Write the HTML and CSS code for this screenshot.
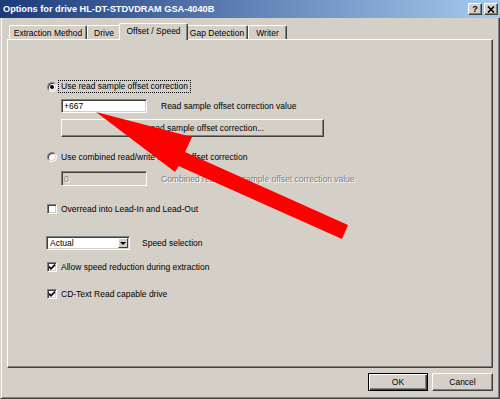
FILE: index.html
```html
<!DOCTYPE html>
<html lang="en">
<head>
    <meta charset="UTF-8">
    <title>Options for drive HL-DT-STDVDRAM GSA-4040B</title>
    <link rel="stylesheet" href="styles.css">
</head>
<body>
    <div class="window">
        <div class="titlebar">
            <span class="title">Options for drive HL-DT-STDVDRAM GSA-4040B</span>
            <div class="caption-buttons">
                <div class="caption-btn">?</div>
                <div class="caption-btn">
                    <svg width="8" height="7" viewBox="0 0 8 7">
                        <path d="M1 0.5 L7 6.5 M7 0.5 L1 6.5" stroke="#000" stroke-width="1.6" fill="none"/>
                    </svg>
                </div>
            </div>
        </div>

        <div class="dialog">
            <div class="tabs">
                <div class="tab">Extraction Method</div>
                <div class="tab">Drive</div>
                <div class="tab active">Offset / Speed</div>
                <div class="tab">Gap Detection</div>
                <div class="tab">Writer</div>
            </div>

            <div class="panel">
                <div class="row opt-read">
                    <span class="radio checked"></span>
                    <span class="label focus">Use read sample offset correction</span>
                </div>
                <div class="row indent read-value">
                    <div class="textbox">+667</div>
                    <span class="field-label">Read sample offset correction value</span>
                </div>
                <div class="row indent detect">
                    <div class="button wide">Detect read sample offset correction...</div>
                </div>
                <div class="row opt-combined">
                    <span class="radio"></span>
                    <span class="label">Use combined read/write sample offset correction</span>
                </div>
                <div class="row indent combined-value">
                    <div class="textbox disabled">0</div>
                    <span class="field-label disabled">Combined read/write sample offset correction value</span>
                </div>
                <div class="row overread">
                    <span class="checkbox"></span>
                    <span class="label">Overread into Lead-In and Lead-Out</span>
                </div>
                <div class="row speed">
                    <div class="select">
                        <span class="select-value">Actual</span>
                        <span class="select-btn"></span>
                    </div>
                    <span class="speed-label">Speed selection</span>
                </div>
                <div class="row reduce">
                    <span class="checkbox checked">
                        <svg width="8" height="8" viewBox="0 0 8 8">
                            <path d="M1 3.6 L3 5.8 L7 1.6" stroke="#000" stroke-width="1.7" fill="none"/>
                        </svg>
                    </span>
                    <span class="label">Allow speed reduction during extraction</span>
                </div>
                <div class="row cdtext">
                    <span class="checkbox checked">
                        <svg width="8" height="8" viewBox="0 0 8 8">
                            <path d="M1 3.6 L3 5.8 L7 1.6" stroke="#000" stroke-width="1.7" fill="none"/>
                        </svg>
                    </span>
                    <span class="label">CD-Text Read capable drive</span>
                </div>
            </div>

            <div class="footer">
                <div class="button default ok">OK</div>
                <div class="button cancel">Cancel</div>
            </div>
        </div>

        <!-- the red pointer drawn over the dialog -->
        <svg class="arrow" width="500" height="399" viewBox="0 0 500 399">
            <polygon points="96,112 192,137 185,152 348,225 342,239 178.5,166 175,172" fill="#ff0000"/>
        </svg>
    </div>
</body>
</html>
```

FILE: styles.css
```css
* {
    margin: 0;
    padding: 0;
    box-sizing: border-box;
}

html, body {
    width: 500px;
    height: 399px;
    overflow: hidden;
}

body {
    font-family: "Liberation Sans", Arial, sans-serif;
    font-size: 8.5px;
    color: #000;
    background: #d4d0c8;
}

.window {
    position: relative;
    width: 500px;
    height: 399px;
    background: #d4d0c8;
}

/* title bar */
.titlebar {
    height: 18px;
    display: flex;
    align-items: center;
    justify-content: space-between;
    padding: 0 2px 0 3px;
    background: linear-gradient(to right, #1c3a7a, #a6caf0);
}

.title {
    color: #fff;
    font-weight: bold;
    font-size: 9.2px;
}

.caption-buttons {
    display: flex;
    gap: 2px;
}

.caption-btn {
    width: 14px;
    height: 12px;
    background: #d4d0c8;
    border: 1px solid;
    border-color: #fff #404040 #404040 #fff;
    box-shadow: inset -1px -1px #808080;
    display: flex;
    align-items: center;
    justify-content: center;
    font-weight: bold;
    font-size: 9px;
    line-height: 1;
}

/* dialog body */
.dialog {
    height: 381px;
    padding: 5px 6px 0 6px;
    border-left: 1px solid #d4d0c8;
    border-right: 1px solid #404040;
    border-bottom: 1px solid #404040;
    box-shadow: inset 1px 0 #fff, inset -1px -1px #808080;
}

.tabs {
    display: flex;
    align-items: flex-end;
    height: 16px;
    padding-left: 2px;
}

.tab {
    height: 14px;
    display: flex;
    align-items: center;
    justify-content: center;
    border-top: 1px solid #fff;
    border-left: 1px solid #fff;
    border-right: 1px solid #404040;
    border-radius: 2px 2px 0 0;
    box-shadow: inset -1px 0 #808080;
    background: #d4d0c8;
}

.tab:nth-child(1) { width: 78px; }
.tab:nth-child(2) { width: 34px; }
.tab:nth-child(3) { width: 65px; }
.tab:nth-child(4) { width: 62px; }
.tab:nth-child(5) { width: 39px; }

.tab.active {
    position: relative;
    z-index: 1;
    width: 69px;
    height: 17px;
    margin: 0 -2px -1px;
    padding-bottom: 2px;
}

.panel {
    height: 329px;
    padding-left: 39px;
    border: 1px solid;
    border-color: #fff #404040 #404040 #fff;
    box-shadow: inset -1px -1px #808080;
}

.row {
    display: flex;
    align-items: center;
}

.indent {
    padding-left: 14px;
}

.opt-read { margin-top: 40px; height: 13px; }
.read-value { margin-top: 6px; height: 14px; }
.detect { margin-top: 6px; height: 18px; }
.opt-combined { margin-top: 14px; height: 12px; }
.combined-value { margin-top: 8px; height: 15px; }
.overread { margin-top: 17px; height: 12px; }
.speed { margin-top: 21px; height: 14px; }
.reduce { margin-top: 11px; height: 12px; }
.cdtext { margin-top: 15px; height: 12px; }

.label {
    margin-left: 4px;
    white-space: nowrap;
}

.label.focus {
    margin-left: 1px;
    padding: 0 2px;
    height: 13px;
    line-height: 11px;
    border: 1px dotted #000;
}

/* radio buttons and check boxes */
.radio,
.checkbox {
    flex: none;
    width: 10px;
    height: 10px;
    background: #fff;
    border: 1px solid;
    border-color: #808080 #fff #fff #808080;
    box-shadow: inset 1px 1px #404040, inset -1px -1px #d4d0c8;
    display: flex;
    align-items: center;
    justify-content: center;
}

.radio {
    border-radius: 50%;
}

.radio.checked::after {
    content: "";
    width: 4px;
    height: 4px;
    border-radius: 50%;
    background: #000;
}

/* edit fields */
.textbox {
    width: 86px;
    height: 100%;
    padding-left: 2px;
    display: flex;
    align-items: center;
    background: #fff;
    border: 1px solid;
    border-color: #808080 #fff #fff #808080;
    box-shadow: inset 1px 1px #404040, inset -1px -1px #d4d0c8;
}

.textbox.disabled {
    background: #d4d0c8;
    color: #808080;
}

.field-label {
    margin-left: 14px;
    white-space: nowrap;
}

.disabled {
    color: #808080;
    text-shadow: 1px 1px #fff;
}

.select {
    width: 84px;
    height: 100%;
    margin-left: -1px;
    display: flex;
    align-items: center;
    justify-content: space-between;
    padding: 1px;
    background: #fff;
    border: 1px solid;
    border-color: #808080 #fff #fff #808080;
    box-shadow: inset 1px 1px #404040, inset -1px -1px #d4d0c8;
}

.select-value {
    padding-left: 2px;
}

.select-btn {
    width: 10px;
    height: 100%;
    display: flex;
    align-items: center;
    justify-content: center;
    background: #d4d0c8;
    border: 1px solid;
    border-color: #fff #404040 #404040 #fff;
}

.select-btn::after {
    content: "";
    border-left: 3px solid transparent;
    border-right: 3px solid transparent;
    border-top: 3px solid #000;
}

.speed-label {
    margin-left: 12px;
}

/* push buttons */
.button {
    height: 18px;
    display: flex;
    align-items: center;
    justify-content: center;
    white-space: nowrap;
    background: #d4d0c8;
    border: 1px solid;
    border-color: #fff #404040 #404040 #fff;
    box-shadow: inset -1px -1px #808080;
}

.button.wide {
    width: 263px;
}

.button.default {
    border-color: #000;
    box-shadow: inset 1px 1px #fff, inset -1px -1px #404040, inset -2px -2px #808080;
}

.footer {
    display: flex;
    justify-content: flex-end;
    gap: 4px;
    margin-top: 5px;
}

.ok { width: 60px; }
.cancel { width: 61px; }

.arrow {
    position: absolute;
    left: 0;
    top: 0;
    pointer-events: none;
}
```
